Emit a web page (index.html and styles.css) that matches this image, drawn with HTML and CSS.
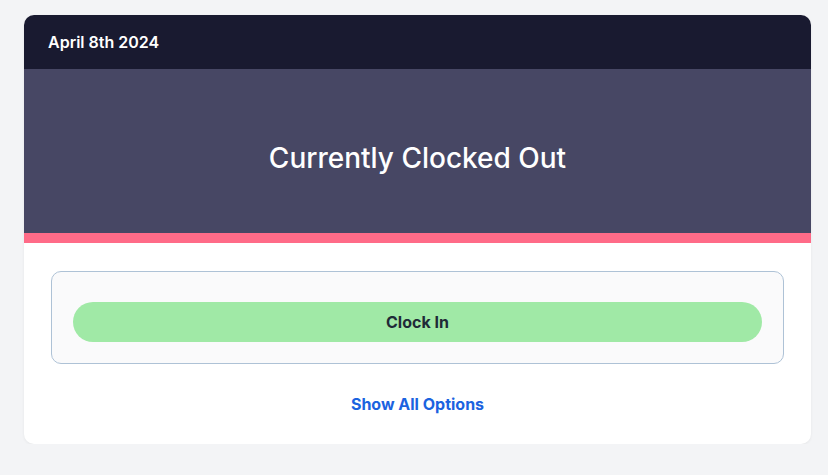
FILE: index.html
```html
<!DOCTYPE html>
<html>
  <head>
    <meta name="viewport" content="width=device-width, initial-scale=1" />
    <link rel="stylesheet" href="styles.css">
  </head>
  <body>
    <div class="card">
      <div class="card-date">April 8th 2024</div>

      <div class="status">
        <h2>Currently Clocked Out</h2>
      </div>
      <div class="status-bar"></div>

      <div class="card-body">
        <div class="actions">
          <button class="clock-btn">Clock In</button>
        </div>
        <a href="#" class="show-all">Show All Options</a>
      </div>
    </div>
  </body>
</html>
```

FILE: styles.css
```css
/* Основной фон страницы */
body {
  margin: 0;
  padding: 15px 17px 0 24px;
  background: #f3f4f6;
  font-family: Inter, "Noto Sans", sans-serif;
}

/* Карточка */
.card {
  background: #fff;
  border-radius: 10px;
  overflow: hidden;
  box-shadow: 0 1px 3px rgba(0, 0, 0, 0.06);
}

.card-date {
  background: #191a30;
  color: #fff;
  font-size: 16px;
  font-weight: 600;
  height: 54px;
  line-height: 54px;
  padding-left: 24px;
}

/* Статус смены */
.status {
  background: #474764;
  height: 164px;
  display: flex;
  align-items: center;
  justify-content: center;
}

.status h2 {
  margin: 14px 0 0;
  color: #fff;
  font-size: 28px;
  font-weight: 500;
}

.status-bar {
  height: 10px;
  background: #ff6b88;
}

.card-body {
  padding: 28px 27px 30px;
  text-align: center;
}

.actions {
  background: #fafafb;
  border: 1px solid #aec2d6;
  border-radius: 10px;
  padding: 30px 21px 21px;
}

.clock-btn {
  display: block;
  width: 100%;
  height: 40px;
  border: none;
  border-radius: 20px;
  background: #a0e9a6;
  color: #1f2a37;
  font-family: inherit;
  font-size: 16px;
  font-weight: 700;
}

.show-all {
  display: inline-block;
  margin-top: 30px;
  color: #1b63e0;
  font-size: 16px;
  font-weight: 700;
  line-height: 20px;
  text-decoration: none;
}
```
